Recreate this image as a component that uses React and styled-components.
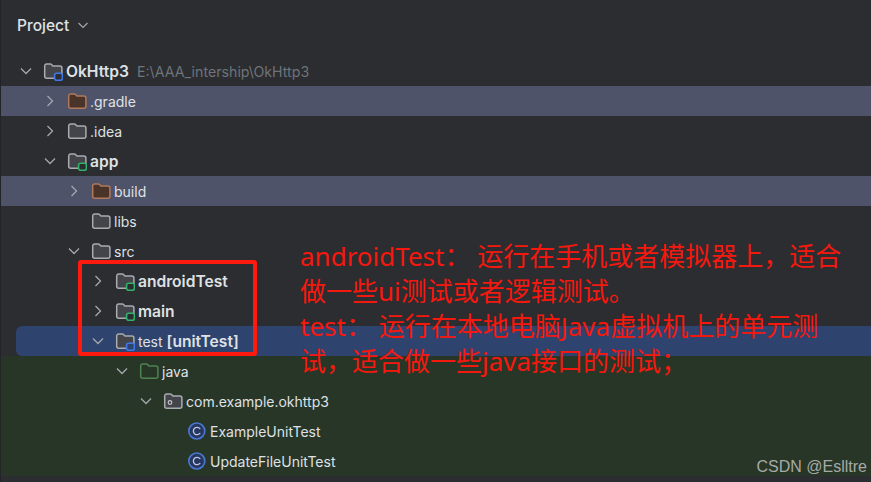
import React from 'react';
import styled, { createGlobalStyle } from 'styled-components';

const Global = createGlobalStyle`
  html, body { margin: 0; padding: 0; background: #2b2d30; }
  body { font-family: Inter, "Noto Sans", "Noto Sans CJK SC", sans-serif; }
`;

const Page = styled.div`
  position: relative;
  width: 871px;
  height: 482px;
  overflow: hidden;
  background: #2b2d30;
  border-left: 1px solid #232427;
  box-sizing: border-box;
`;

const Header = styled.header`
  display: flex;
  align-items: center;
  gap: 8px;
  height: 56px;
  padding: 0 0 6px 16px;
  box-sizing: border-box;
  color: #dfe1e5;
  font-size: 15.5px;
  font-weight: 500;
`;

const Tree = styled.div`
  display: flex;
  flex-direction: column;
`;

const tones = {
  none: 'transparent',
  ignored: '#4f5369',
  selected: '#2e436e',
  scope: '#283628',
};

const Row = styled.div`
  display: flex;
  align-items: center;
  height: 30px;
  box-sizing: border-box;
  margin-left: ${(p) => (p.$tone === 'selected' ? 15 : 0)}px;
  padding-left: ${(p) => 17 + p.$depth * 24 - (p.$tone === 'selected' ? 15 : 0)}px;
  background: ${(p) => tones[p.$tone]};
  border-radius: ${(p) => (p.$tone === 'selected' ? '6px 0 0 6px' : '0')};
  color: #dfe1e5;
  font-size: 14px;
`;

const ChevronSlot = styled.span`
  display: flex;
  width: 16px;
  height: 16px;
  margin-right: 9px;
  flex: none;
`;

const IconSlot = styled.span`
  display: flex;
  width: 20px;
  height: 20px;
  margin-right: 3px;
  flex: none;
`;

const Label = styled.span`
  font-weight: ${(p) => (p.$bold ? 600 : 400)};
  font-size: ${(p) => (p.$bold ? 15.6 : 14)}px;
  white-space: nowrap;
`;

const Strong = styled.b`
  font-weight: 600;
  font-size: 15.6px;
  margin-left: 4px;
`;

const Path = styled.span`
  margin-left: 8px;
  color: #6f737a;
  font-size: 14.2px;
  white-space: nowrap;
`;

const Callout = styled.div`
  position: absolute;
  left: 77px;
  top: 260px;
  width: 179px;
  height: 96px;
  box-sizing: border-box;
  border: 4px solid #ff1a10;
  border-radius: 3px;
`;

const Note = styled.div`
  position: absolute;
  left: 299px;
  top: 239px;
  width: 560px;
  color: #f5180e;
  font-family: "Noto Sans", "Noto Sans CJK SC", sans-serif;
  font-size: 26px;
  line-height: 35px;
`;

const NoteLine = styled.div`
  white-space: nowrap;
`;

const Watermark = styled.div`
  position: absolute;
  right: 4px;
  bottom: 5px;
  color: #a6aaa6;
  font-family: "Liberation Sans", sans-serif;
  font-size: 16px;
  line-height: 20px;
`;

const Chevron = ({ open }) => (
  <svg width="16" height="16" viewBox="0 0 16 16" fill="none" stroke="#a4a7ad" strokeWidth="1.3">
    {open ? <path d="M3 5.5 8 10.5 13 5.5" /> : <path d="M5.5 3 10.5 8 5.5 13" />}
  </svg>
);

const folderColors = {
  plain: ['#a8abb0', '#43454a'],
  excluded: ['#b0795a', '#4a3328'],
  source: ['#4f8350', 'transparent'],
  pack: ['#a8abb0', '#43454a'],
};

const badgeColors = { blue: '#3f78e8', green: '#2fb36b' };

const Folder = ({ kind = 'plain', badge, bg = '#2b2d30' }) => {
  const [stroke, fill] = folderColors[kind];
  return (
    <svg width="20" height="20" viewBox="0 0 20 20" fill="none">
      <path
        d="M1.7 5a2 2 0 0 1 2-2h3.6a1.6 1.6 0 0 1 1.2.5l1.4 1.5h7a2 2 0 0 1 2 2v8.3a2 2 0 0 1-2 2h-13.2a2 2 0 0 1-2-2z"
        fill={fill}
        stroke={stroke}
        strokeWidth="1.5"
      />
      {kind === 'pack' && <circle cx="7" cy="11.5" r="1.8" stroke="#c0c3c8" strokeWidth="1.2" />}
      {badge && (
        <rect x="11.6" y="12.3" width="7.8" height="7" rx="2" fill={bg} stroke={badgeColors[badge]} strokeWidth="1.6" />
      )}
    </svg>
  );
};

const ClassIcon = () => (
  <svg width="20" height="20" viewBox="0 0 20 20" fill="none">
    <circle cx="9.8" cy="10" r="8" fill="#27375f" stroke="#4a78d4" strokeWidth="1.6" />
    <path d="M12.9 7.6a3.7 3.7 0 1 0 0 4.8" stroke="#b9c8ec" strokeWidth="1.3" strokeLinecap="round" />
  </svg>
);

const rows = [
  { d: 0, open: true, icon: 'blue', name: 'OkHttp3', bold: true, path: 'E:\\AAA_intership\\OkHttp3' },
  { d: 1, open: false, kind: 'excluded', name: '.gradle', tone: 'ignored' },
  { d: 1, open: false, name: '.idea' },
  { d: 1, open: true, icon: 'green', name: 'app', bold: true },
  { d: 2, open: false, kind: 'excluded', name: 'build', tone: 'ignored' },
  { d: 2, name: 'libs' },
  { d: 2, open: true, name: 'src' },
  { d: 3, open: false, icon: 'green', name: 'androidTest', bold: true },
  { d: 3, open: false, icon: 'green', name: 'main', bold: true },
  { d: 3, open: true, icon: 'blue', name: 'test', extra: '[unitTest]', tone: 'selected' },
  { d: 4, open: true, kind: 'source', name: 'java', tone: 'scope' },
  { d: 5, open: true, kind: 'pack', name: 'com.example.okhttp3', tone: 'scope' },
  { d: 6, cls: true, name: 'ExampleUnitTest', tone: 'scope' },
  { d: 6, cls: true, name: 'UpdateFileUnitTest', tone: 'scope' },
];

const notes = [
  'androidTest： 运行在手机或者模拟器上，适合',
  '做一些ui测试或者逻辑测试。',
  'test： 运行在本地电脑Java虚拟机上的单元测',
  '试，适合做一些java接口的测试；',
];

export default function App() {
  return (
    <Page>
      <Global />
      <Header>
        Project
        <svg width="12" height="12" viewBox="0 0 12 12" fill="none" stroke="#a4a7ad" strokeWidth="1.2">
          <path d="M1.5 4 6 8.5 10.5 4" />
        </svg>
      </Header>
      <Tree>
        {rows.map((r) => (
          <Row key={r.name} $depth={r.d} $tone={r.tone || 'none'}>
            <ChevronSlot>{r.open !== undefined && <Chevron open={r.open} />}</ChevronSlot>
            <IconSlot>
              {r.cls ? (
                <ClassIcon />
              ) : (
                <Folder kind={r.kind} badge={r.icon} bg={r.tone === 'selected' ? '#2e436e' : '#2b2d30'} />
              )}
            </IconSlot>
            <Label $bold={r.bold}>{r.name}</Label>
            {r.extra && <Strong>{r.extra}</Strong>}
            {r.path && <Path>{r.path}</Path>}
          </Row>
        ))}
      </Tree>
      <Callout />
      <Note>
        {notes.map((n) => (
          <NoteLine key={n}>{n}</NoteLine>
        ))}
      </Note>
      <Watermark>CSDN @Eslltre</Watermark>
    </Page>
  );
}
